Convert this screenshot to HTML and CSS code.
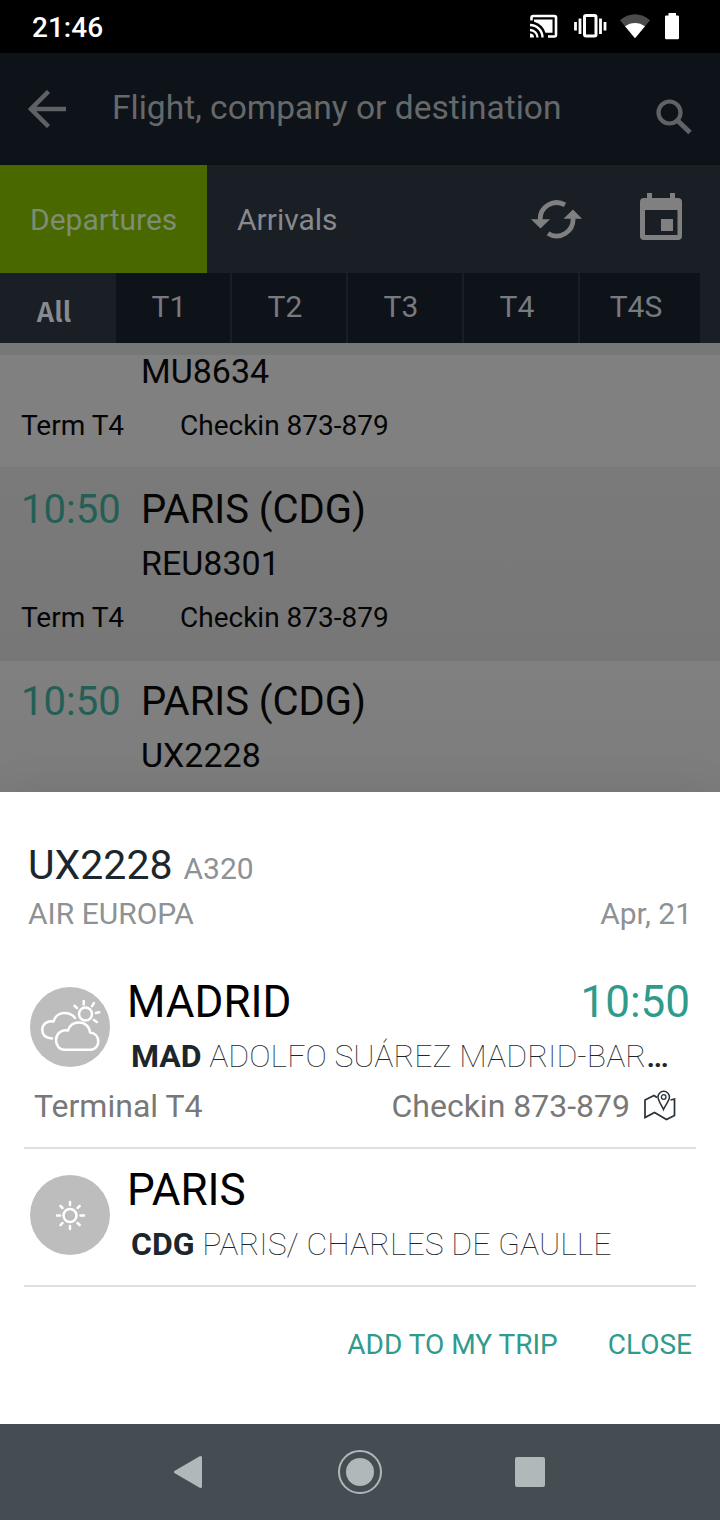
FILE: index.html
```html
<!DOCTYPE html>
<html lang="en">
<head>
<meta charset="utf-8">
<title>Flights</title>
<link rel="stylesheet" href="styles.css">
</head>
<body>
<div class="screen">
  <div class="status">
    <span class="clock">21:46</span>
    <svg class="status-icons" width="152" height="30" viewBox="0 0 152 30">
      <g fill="none" stroke="#fff">
        <path d="M1.500 7.500V4.500a1.500 1.500 0 0 1 1.500-1.500H24.500a1.500 1.500 0 0 1 1.500 1.500V22a1.500 1.500 0 0 1-1.500 1.500H18" stroke-width="2.600"/>
        <path d="M0 17a7.500 7.500 0 0 1 7.500 7.500M0 12a12.500 12.500 0 0 1 12.500 12.500" stroke-width="2.300"/>
      </g>
      <path d="M0 20.500a4 4 0 0 1 4 4H0z" fill="#fff"/>
      <path d="M4 6.500H22.500V19.800H15.500A17 17 0 0 0 4 8.800z" fill="#fff"/>
      <rect x="54.500" y="2.500" width="11.500" height="20.500" rx="1.500" fill="none" stroke="#fff" stroke-width="3"/>
      <path d="M50 5.500V21M70.500 5.500V21M45.500 9V17.500M75 9V17.500" stroke="#fff" stroke-width="2.800"/>
      <path d="M90 7.200C98.500-.8 111.500-.8 120 7.200L105 25.200z" fill="#4b4b4b"/>
      <path d="M95 13.300C101 8.800 109 8.800 115 13.300L105 25.200z" fill="#fff"/>
      <path d="M138.500 0h7.500v2.500h1.800a1.200 1.200 0 0 1 1.200 1.200V25a1.200 1.200 0 0 1-1.200 1.200H136.200A1.200 1.200 0 0 1 135 25V3.700a1.200 1.200 0 0 1 1.200-1.200h2.300z" fill="#fff"/>
    </svg>
  </div>

  <div class="search">
    <svg class="back" width="38" height="38" viewBox="0 0 38 38"><path d="M38 19H4M20.500 1.500L3 19L20.500 36.500" fill="none" stroke="#5f6265" stroke-width="4.500"/></svg>
    <span class="hint">Flight, company or destination</span>
    <svg class="find" width="36" height="36" viewBox="0 0 36 36"><g fill="none" stroke="#5f6368"><circle cx="13.500" cy="13.500" r="11" stroke-width="4.200"/><path d="M21.500 21.500L34 33.500" stroke-width="5"/></g></svg>
  </div>

  <div class="modes">
    <div class="mode active">Departures</div>
    <div class="mode">Arrivals</div>
    <svg class="refresh" width="52" height="40" viewBox="0 0 52 40">
      <g fill="none" stroke="#808080" stroke-width="4.800"><path d="M34 4.900A16.500 16.500 0 0 0 9.200 20"/><path d="M17 33.500A16.500 16.500 0 0 0 42 18"/></g>
      <path d="M0 19.200H19L9.500 28.500zM32.500 18.800H51L42 9.500z" fill="#808080"/>
    </svg>
    <svg class="calendar" width="42" height="47" viewBox="0 0 42 47">
      <path fill="#808080" fill-rule="evenodd" d="M7 0h5v5h18V0h5v5h3a4 4 0 0 1 4 4v34a4 4 0 0 1-4 4H4a4 4 0 0 1-4-4V9a4 4 0 0 1 4-4h3zM5 17v25h32.500V17zM21 26h12v12H21z"/>
    </svg>
  </div>

  <div class="terminals">
    <div class="term all">All</div>
    <div class="term">T1</div>
    <div class="term">T2</div>
    <div class="term">T3</div>
    <div class="term">T4</div>
    <div class="term last">T4S</div>
  </div>

  <div class="list">
    <div class="strip"></div>
    <div class="flight partial">
      <div class="code">MU8634</div>
      <div class="meta"><span class="gate">Term T4</span><span>Checkin 873-879</span></div>
    </div>
    <div class="flight alt">
      <div class="top"><span class="time">10:50</span><span>PARIS (CDG)</span></div>
      <div class="code">REU8301</div>
      <div class="meta"><span class="gate">Term T4</span><span>Checkin 873-879</span></div>
    </div>
    <div class="flight next">
      <div class="top"><span class="time">10:50</span><span>PARIS (CDG)</span></div>
      <div class="code">UX2228</div>
    </div>
  </div>

  <div class="sheet">
    <div class="title"><span class="number">UX2228</span><span class="plane">A320</span></div>
    <div class="carrier"><span>AIR EUROPA</span><span>Apr, 21</span></div>
    <div class="stop origin">
      <div class="stop-head">
        <svg class="weather" width="80" height="80" viewBox="0 0 80 80">
          <circle cx="40" cy="40" r="40" fill="#bdbdbd"/>
          <g fill="none" stroke="#fff" stroke-width="2.500" stroke-linecap="round" stroke-linejoin="round">
            <path d="M34.500 62.800H60C65.500 62.800 68.300 58.500 68.300 54.500C68.300 49.500 65 46 60 45.500C59.500 39.500 55 35.500 49 35.500C43.500 35.500 39.500 38.500 38 43.500C31 42 26 47 26 53C26 58.500 29.500 62.800 34.500 62.800z"/>
            <path d="M22 51.500C15.500 51 12.300 47.500 12.300 43C12.300 37 17.500 33.300 23.500 34.500C25 29 29.500 26 34.500 26C39 26 42.500 27.500 45 31"/>
            <circle cx="55.500" cy="27" r="6.500"/>
            <path d="M53.700 14V17.500M64 16L62 19.200M69.300 25.200L65.800 26M66.800 35L63.800 33M44.500 18.800L47 21"/>
          </g>
        </svg>
        <div class="place">
          <div class="city"><span>MADRID</span><span class="depart">10:50</span></div>
          <div class="airport"><b>MAD</b> ADOLFO SUÁREZ MADRID-BAR<b class="dots">…</b></div>
        </div>
      </div>
      <div class="desk">
        <span>Terminal T4</span><span class="checkin">Checkin 873-879</span>
        <svg class="map" width="32" height="32" viewBox="0 0 32 32" fill="none" stroke="#263039" stroke-width="1.700">
          <path d="M13 7.500L10 5.500L1 10V27.500L10.500 22.500L22.500 29.500L30.500 25.500V9L26.500 10"/>
          <path d="M19.500 19.500C17.500 14.500 14 11 14 7A5.700 5.700 0 0 1 25.400 7C25.400 11 21.500 14.500 19.500 19.500z" stroke-width="1.500"/><circle cx="19.700" cy="7" r="2.300" stroke-width="1.300"/>
        </svg>
      </div>
    </div>
    <div class="stop target">
      <div class="stop-head">
        <svg class="weather" width="80" height="80" viewBox="0 0 80 80">
          <circle cx="40" cy="40" r="40" fill="#bdbdbd"/>
          <g fill="none" stroke="#fff" stroke-width="2.500" stroke-linecap="round">
            <circle cx="40" cy="40.500" r="6.500"/>
            <path d="M40 27V30M40 51V54M27 40.500H30M50.500 40.500H54M30.500 31L32.500 33M47.500 48L49.700 50.200M49.700 31L47.500 33M30.500 50.200L32.500 48"/>
          </g>
        </svg>
        <div class="place">
          <div class="city"><span>PARIS</span></div>
          <div class="airport"><b>CDG</b> PARIS/ CHARLES DE GAULLE</div>
        </div>
      </div>
    </div>
    <div class="actions"><span>ADD TO MY TRIP</span><span>CLOSE</span></div>
  </div>

  <div class="nav">
    <svg width="30" height="34" viewBox="0 0 30 34"><path d="M27.500 2.500V31.500L2.500 17z" fill="#b1b8b9" stroke="#b1b8b9" stroke-width="3" stroke-linejoin="round"/></svg>
    <svg class="home" width="44" height="44" viewBox="0 0 44 44"><circle cx="22" cy="22" r="21" fill="none" stroke="#b1b8bd" stroke-width="2"/><circle cx="22" cy="22" r="14" fill="#b1b8b9"/></svg>
    <svg width="30" height="30" viewBox="0 0 30 30"><rect width="30" height="30" rx="2" fill="#b1b8b9"/></svg>
  </div>
</div>
</body>
</html>
```
FILE: styles.css
```css
* { box-sizing: border-box; }
body { margin: 0; background: #000; font-family: Roboto, "Liberation Sans", sans-serif; }
svg { display: block; flex: none; }
.screen { width: 720px; height: 1520px; display: flex; flex-direction: column; overflow: hidden; white-space: nowrap; }

.status { height: 53px; flex: none; background: #000; color: #fff; display: flex; justify-content: space-between; padding: 0 38px 0 32px; }
.clock { font-size: 28px; font-weight: 500; line-height: 55px; }
.status-icons { margin-top: 13px; }

.search { height: 112px; flex: none; background: #0e131a; display: flex; padding: 0 28px; border-bottom: 1px solid #0c120f; }
.back { margin-top: 37px; }
.hint { margin-left: 46px; font-size: 33.550px; line-height: 109px; color: #66686a; flex: 1; }
.find { margin-top: 46px; }

.modes { height: 108px; flex: none; background: #1a1e25; display: flex; }
.mode { padding: 0 30px; font-size: 30px; line-height: 110px; color: #87898c; }
.mode.active { width: 207px; background: #4a6800; color: #7e8c74; }
.refresh { margin: 35px 0 0 auto; }
.calendar { margin: 28px 38px 0 57px; }

.terminals { height: 70px; flex: none; background: #1a1e25; display: flex; }
.term { width: 116px; border-right: 2px solid #1a1e25; background: #0e131a; color: #777a80; font-size: 30px; line-height: 68px; text-align: center; padding-right: 8px; }
.term.all { background: #1a1e25; color: #878a8e; font-family: "Noto Sans CJK SC", sans-serif; font-size: 27px; font-weight: 700; line-height: 75px; padding-right: 6px; }
.term.last { width: 120px; border: 0; padding-right: 8px; }

.list { height: 449px; flex: none; overflow: hidden; background: #808080; color: #050505; }
.strip { height: 12px; background: #767877; }
.flight { height: 194px; padding: 16px 22px 0 21px; background: linear-gradient(#808080, #7b7b7b); }
.flight.alt { background: linear-gradient(#7a7a7a, #777); }
.flight.partial { height: 112px; padding-top: 0; background: #808080; }
.flight.next { padding-top: 14px; }
.top { display: flex; height: 53px; line-height: 54px; font-size: 40px; }
.time { width: 120px; color: #245f56; }
.code { height: 54px; line-height: 54px; font-size: 34px; padding-left: 120px; }
.partial .code { height: 43px; line-height: 33px; }
.meta { display: flex; height: 54px; line-height: 56px; font-size: 28px; }
.gate { width: 159px; }

.sheet { height: 632px; flex: none; background: #fff; padding: 46px 24px 0; position: relative; box-shadow: 0 0 40px rgba(0, 0, 0, .08); }
.title { display: flex; height: 54px; padding-left: 4px; line-height: 54px; color: #1c262d; }
.number { font-size: 41px; }
.plane { margin-left: 11px; font-size: 30px; line-height: 62px; color: #8e9295; }
.carrier { display: flex; justify-content: space-between; height: 44px; line-height: 44px; font-size: 30px; color: #8e9295; padding: 0 4px; }
.stop { border-bottom: 2px solid #dfdfdf; }
.origin { height: 213px; padding-top: 35px; }
.target { height: 138px; padding-top: 10px; }
.stop-head { display: flex; height: 106px; padding-left: 6px; }
.weather { margin-top: 16px; }
.place { margin-left: 17px; flex: 1; }
.city { display: flex; justify-content: space-between; height: 62px; line-height: 62px; padding-right: 6px; font-size: 44px; color: #000; }
.depart { color: #309b8c; }
.airport { height: 46px; line-height: 46px; padding-left: 4px; font-size: 32px; font-weight: 100; color: #1c262d; }
.airport b { font-weight: 700; }
.airport .dots { font-weight: 500; }
.desk { display: flex; height: 58px; line-height: 58px; padding: 0 20px 0 10px; font-size: 32px; color: #787878; }
.checkin { margin-left: auto; }
.map { margin: 13px 0 0 14px; }
.actions { display: flex; justify-content: flex-end; gap: 50px; padding: 35px 4px 0 0; height: 100px; line-height: 46px; font-size: 28px; color: #309b8c; }

.nav { height: 96px; flex: none; background: #464d52; display: flex; align-items: center; padding: 0 175px 0 173px; justify-content: space-between; position: relative; }
.home { margin-left: 1px; }
```
